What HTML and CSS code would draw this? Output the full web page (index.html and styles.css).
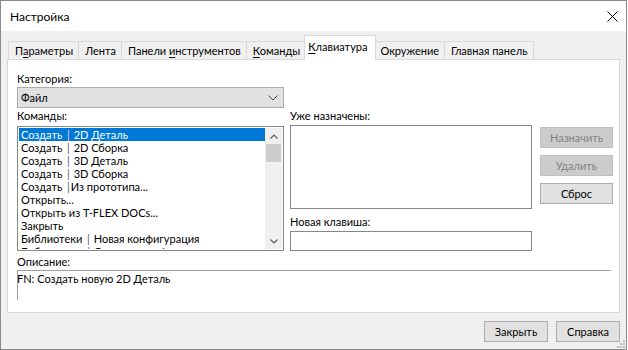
FILE: index.html
```html
<!DOCTYPE html>
<html>
    <head>
        <title>Настройка</title>
        <link rel="stylesheet" href="styles.css">
    </head>
    <body>
        <div class="window">

            <div class="titlebar">
                <span class="title">Настройка</span>
                <svg class="close" width="11" height="11" viewBox="0 0 11 11">
                    <path d="M0.5 0.5L10.5 10.5M10.5 0.5L0.5 10.5" stroke="#000" stroke-width="1" fill="none"/>
                </svg>
            </div>

            <div class="client">

                <div class="tabs">
                    <div class="tab">П<u>а</u>раметры</div>
                    <div class="tab">Лента</div>
                    <div class="tab">Панели <u>и</u>нструментов</div>
                    <div class="tab"><u>К</u>оманды</div>
                    <div class="tab active"><u>К</u>лавиатура</div>
                    <div class="tab">Окружение</div>
                    <div class="tab">Главная панель</div>
                </div>

                <div class="panel">
                    <div class="label">Категория:</div>
                    <div class="combo">
                        <span>Файл</span>
                        <svg width="10" height="6" viewBox="0 0 10 6">
                            <path d="M0.5 0.5L5 5L9.5 0.5" stroke="#444" stroke-width="1" fill="none"/>
                        </svg>
                    </div>

                    <div class="mid">
                        <div class="col-commands">
                            <div class="label">Команды:</div>
                            <div class="listbox">
                                <div class="items">
                                    <div class="item selected">Создать <span class="sep">|</span> 2D Деталь</div>
                                    <div class="item">Создать <span class="sep">|</span> 2D Сборка</div>
                                    <div class="item">Создать <span class="sep">|</span> 3D Деталь</div>
                                    <div class="item">Создать <span class="sep">|</span> 3D Сборка</div>
                                    <div class="item">Создать <span class="sep">|</span>Из прототипа...</div>
                                    <div class="item">Открыть...</div>
                                    <div class="item">Открыть из T-FLEX DOCs...</div>
                                    <div class="item">Закрыть</div>
                                    <div class="item">Библиотеки <span class="sep">|</span> Новая конфигурация</div>
                                    <div class="item">Библиотеки <span class="sep">|</span> Открыть конфигурацию</div>
                                </div>
                                <div class="scrollbar">
                                    <div class="arrow">
                                        <svg width="8" height="5" viewBox="0 0 8 5"><path d="M0.5 4.5L4 1L7.5 4.5" stroke="#606060" stroke-width="1.2" fill="none"/></svg>
                                    </div>
                                    <div class="thumb"></div>
                                    <div class="track"></div>
                                    <div class="arrow">
                                        <svg width="8" height="5" viewBox="0 0 8 5"><path d="M0.5 0.5L4 4L7.5 0.5" stroke="#606060" stroke-width="1.2" fill="none"/></svg>
                                    </div>
                                </div>
                            </div>
                        </div>

                        <div class="col-keys">
                            <div class="label">Уже назначены:</div>
                            <div class="assigned"></div>
                            <div class="label new-key">Новая клавиша:</div>
                            <div class="keybox"></div>
                        </div>

                        <div class="col-buttons">
                            <button class="btn" disabled>Назначить</button>
                            <button class="btn" disabled>Удалить</button>
                            <button class="btn">Сброс</button>
                        </div>
                    </div>

                    <div class="label desc-label">Описание:</div>
                    <div class="desc">FN: Создать новую 2D Деталь</div>
                </div>

                <div class="footer">
                    <button class="btn">Закрыть</button>
                    <button class="btn">Справка</button>
                </div>

            </div>

            <svg class="grip" width="8" height="8" viewBox="0 0 8 8">
                <rect x="6" y="0" width="2" height="2" fill="#bcbcbc"/>
                <rect x="3" y="3" width="2" height="2" fill="#bcbcbc"/>
                <rect x="6" y="3" width="2" height="2" fill="#bcbcbc"/>
                <rect x="0" y="6" width="2" height="2" fill="#bcbcbc"/>
                <rect x="3" y="6" width="2" height="2" fill="#bcbcbc"/>
                <rect x="6" y="6" width="2" height="2" fill="#bcbcbc"/>
            </svg>

        </div>
    </body>
</html>
```

FILE: styles.css
```css
body{
    margin: 0;
    background-color: #fff;
    font-family: "Segoe UI", Lato, Roboto, sans-serif;
    font-size: 11px;
    color: #000;
}

.window{
    position: relative;
    width: 625px;
    height: 348px;
    border: 1px solid #8a8a8a;
    background-color: #f0f0f0;
    display: flex;
    flex-direction: column;
}

.titlebar{
    height: 30px;
    background-color: #fff;
    display: flex;
    align-items: center;
    justify-content: space-between;
    padding: 0 8px 0 9px;
}

.title{
    font-size: 12px;
    line-height: 15px;
}

.client{
    flex: 1;
    padding-top: 5px;
}

/* tab strip */

.tabs{
    display: flex;
    align-items: flex-end;
    height: 23px;
    padding-left: 7px;
    position: relative;
    z-index: 1;
}

.tab{
    height: 17px;
    line-height: 17px;
    padding: 0 5px 0 6px;
    border: 1px solid #d9d9d9;
    border-bottom: none;
    margin-left: -1px;
    white-space: nowrap;
}

.tab:first-child{
    margin-left: 0;
}

.tab.active{
    height: 24px;
    line-height: 21px;
    margin: 0 -2px -1px -2px;
    padding: 0 8px 0 3px;
    background-color: #fff;
    position: relative;
}

u{
    text-decoration-thickness: 1px;
    text-underline-offset: 2px;
}

.panel{
    margin: 0 6px;
    border: 1px solid #d9d9d9;
    background-color: #fff;
    padding: 12px 6px 12px 9px;
}

.label{
    line-height: 13px;
    padding-bottom: 2px;
}

.combo{
    width: 257px;
    height: 19px;
    border: 1px solid #adadad;
    background-color: #e1e1e1;
    display: flex;
    align-items: center;
    justify-content: space-between;
    padding: 0 5px 0 3px;
}

.mid{
    display: flex;
    margin-top: 1px;
}

.col-commands{
    width: 267px;
}

.listbox{
    margin-top: 2px;
    height: 125px;
    border: 1px solid #828790;
    display: flex;
    overflow: hidden;
    padding: 1px;
    box-sizing: border-box;
}

.items{
    flex: 1;
    overflow: hidden;
}

.item{
    height: 13px;
    line-height: 13px;
    padding-left: 2px;
    white-space: nowrap;
}

.item.selected{
    background-color: #0078d7;
    color: #fff;
}

.sep{
    color: #5a5a6a;
    margin: 0 1px 0 2px;
}

.item.selected .sep{
    color: #e0d8f0;
}

.scrollbar{
    width: 17px;
    background-color: #f0f0f0;
    display: flex;
    flex-direction: column;
}

.arrow{
    height: 16px;
    display: flex;
    align-items: center;
    justify-content: center;
}

.thumb{
    height: 18px;
    margin: 0 1px;
    background-color: #cdcdcd;
}

.track{
    flex: 1;
}

.col-keys{
    width: 242px;
    margin-left: 6px;
}

.assigned{
    margin-top: 1px;
    height: 84px;
    border: 1px solid #828790;
    box-sizing: border-box;
}

.new-key{
    margin-top: 6px;
}

.keybox{
    margin-top: 1px;
    height: 20px;
    border: 1px solid #828790;
    box-sizing: border-box;
}

.col-buttons{
    margin-left: 8px;
    padding-top: 18px;
    display: flex;
    flex-direction: column;
    gap: 7px;
}

.btn{
    width: 73px;
    height: 21px;
    padding: 0;
    border: 1px solid #adadad;
    background-color: #e1e1e1;
    font-family: inherit;
    font-size: 11px;
    color: #000;
}

.btn:disabled{
    background-color: #cccccc;
    border-color: #bfbfbf;
    color: #838383;
}

.desc-label{
    margin-top: 4px;
}

.desc{
    height: 29px;
    margin-right: 2px;
    border-top: 1px solid #a0a0a0;
    border-left: 1px solid #a0a0a0;
    line-height: 13px;
    padding-top: 1px;
    box-sizing: border-box;
    height: 30px;
    text-indent: -1px;
}

.footer{
    display: flex;
    justify-content: flex-end;
    gap: 8px;
    padding: 8px 6px 0 0;
}

.footer .btn{
    width: 64px;
}

.grip{
    position: absolute;
    right: 1px;
    bottom: 1px;
}
```
